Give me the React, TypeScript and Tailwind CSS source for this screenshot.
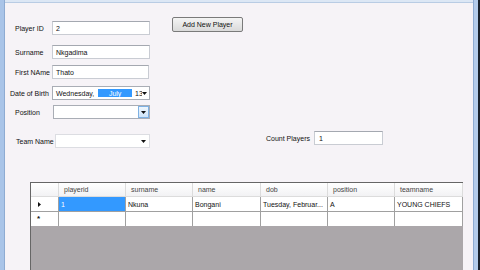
import React from "react";

const columns = [
  { name: "playerid", w: "w-[67px]" },
  { name: "surname", w: "w-[67px]" },
  { name: "name", w: "w-[68px]" },
  { name: "dob", w: "w-[67px]" },
  { name: "position", w: "w-[67px]" },
  { name: "teamname", w: "w-[68px]" },
];

const row = ["1", "Nkuna", "Bongani", "Tuesday, Februar...", "A", "YOUNG CHIEFS"];

function Arrow() {
  return (
    <svg width="5" height="3" viewBox="0 0 5 3">
      <polygon points="0,0 5,0 2.5,3" fill="#111" />
    </svg>
  );
}

function TextBox({ value, className = "" }: { value?: string; className?: string }) {
  return (
    <div
      className={`flex h-[14px] items-center border border-[#c9ccd3] border-t-[#a4a8b0] bg-white pl-[3px] ${className}`}
    >
      {value}
    </div>
  );
}

function Field({ label, labelClass, children, className = "" }: { label: string; labelClass: string; children: React.ReactNode; className?: string }) {
  return (
    <div className={`flex items-center ${className}`}>
      <span className={`shrink-0 ${labelClass}`}>{label}</span>
      {children}
    </div>
  );
}

export default function App() {
  return (
    <div className="flex h-[270px] w-[480px] overflow-hidden bg-[#f6f3f7] font-['Liberation_Sans',Arial,sans-serif] text-[7px] leading-none text-[#111]">
      {/* left window frame */}
      <div className="h-full w-[5px] shrink-0 bg-[#a9c4e8] shadow-[inset_-1px_0_0_#8eabd2]" />

      <div className="flex h-full w-[468px] shrink-0 flex-col">
        <div className="h-[3px] shrink-0 border-b border-[#b9cce4] bg-[#dce7f5]" />

        <div className="flex flex-1 flex-col pl-[5px] pt-[14px]">
          <div className="flex items-start">
            {/* form fields */}
            <div className="mt-[4px] flex w-[140px] flex-col">
              <Field label="Player ID" labelClass="ml-[5px] w-[37px]">
                <TextBox value="2" className="w-[98px]" />
              </Field>
              <Field label="Surname" labelClass="ml-[5px] w-[37px]" className="mt-[10px]">
                <TextBox value="Nkgadima" className="w-[98px]" />
              </Field>
              <Field label="First NAme" labelClass="ml-[5px] w-[37px]" className="mt-[6px]">
                <TextBox value="Thato" className="w-[97px]" />
              </Field>
              <Field label="Date of Birth" labelClass="w-[42px]" className="mt-[7px]">
                <div className="flex h-[14px] w-[98px] items-center border border-[#a9adb5] bg-white pl-[3px]">
                  <span>Wednesday,</span>
                  <span className="ml-[4px] flex h-[8px] w-[34px] items-center justify-center bg-[#3399ff] text-white">July</span>
                  <span className="ml-[3px] w-[7px] overflow-hidden whitespace-nowrap">13</span>
                  <span className="ml-auto mr-[2px] flex">
                    <Arrow />
                  </span>
                </div>
              </Field>
              <Field label="Position" labelClass="ml-[5px] w-[38px]" className="mt-[5px]">
                <div className="flex h-[14px] w-[97px] items-center border border-[#a9adb5] bg-white">
                  <span className="ml-auto flex h-[12px] w-[11px] items-center justify-center border border-[#7fb1e3] bg-gradient-to-b from-[#eef6fd] to-[#cfe4f8]">
                    <Arrow />
                  </span>
                </div>
              </Field>
            </div>

            {/* button */}
            <button className="ml-[22px] flex h-[15px] w-[71px] items-center justify-center rounded-[2px] border border-[#7a7a7a] bg-gradient-to-b from-[#f4f4f4] to-[#dadada] text-[7px]">
              Add New Player
            </button>
          </div>

          {/* team name + count players */}
          <div className="mt-[12px] flex items-start">
            <Field label="Team Name" labelClass="ml-[6px] w-[39px]" className="mt-[3px]">
              <div className="flex h-[14px] w-[95px] items-center border border-[#dcdde2] bg-white">
                <span className="ml-auto mr-[3px] flex">
                  <Arrow />
                </span>
              </div>
            </Field>
            <Field label="Count Players" labelClass="w-[48px]" className="ml-[116px]">
              <TextBox value="1" className="w-[69px] pl-[4px]" />
            </Field>
          </div>

          {/* data grid */}
          <div className="ml-[20px] mt-[34px] flex w-[433px] flex-1 flex-col border-l border-t border-[#666] bg-[#aba7aa]">
            <div className="flex h-[14px] bg-gradient-to-b from-white to-[#f1f1f3]">
              <div className="w-[28px] border-r border-b border-[#dcdcdc]" />
              {columns.map((c) => (
                <div key={c.name} className={`${c.w} flex items-center border-r border-b border-[#dcdcdc] pl-[5px] text-[#444]`}>
                  {c.name}
                </div>
              ))}
            </div>
            <div className="flex h-[15px] bg-white">
              <div className="flex w-[28px] items-center border-r border-b border-[#a0a0a0] pl-[7px]">
                <svg width="3" height="5" viewBox="0 0 3 5">
                  <polygon points="0,0 3,2.5 0,5" fill="#111" />
                </svg>
              </div>
              {row.map((v, i) => (
                <div
                  key={i}
                  className={`${columns[i].w} flex items-center overflow-hidden whitespace-nowrap border-r border-b border-[#a0a0a0] pl-[2px] ${
                    i === 0 ? "bg-[#3399ff] text-white" : ""
                  }`}
                >
                  {v}
                </div>
              ))}
            </div>
            <div className="flex h-[14px] bg-white">
              <div className="flex w-[28px] items-center border-r border-[#a0a0a0] pl-[6px] text-[8px] font-bold">*</div>
              {columns.map((c) => (
                <div key={c.name} className={`${c.w} border-r border-[#a0a0a0]`} />
              ))}
            </div>
            <div className="flex-1 bg-[#aba7aa]" />
          </div>
        </div>
      </div>

      {/* right window frame */}
      <div className="h-full w-[5px] shrink-0 bg-[#b3cbea] shadow-[inset_1px_0_0_#8eabd2]" />
      <div className="h-full w-[2px] shrink-0 bg-[#18212c]" />
    </div>
  );
}
